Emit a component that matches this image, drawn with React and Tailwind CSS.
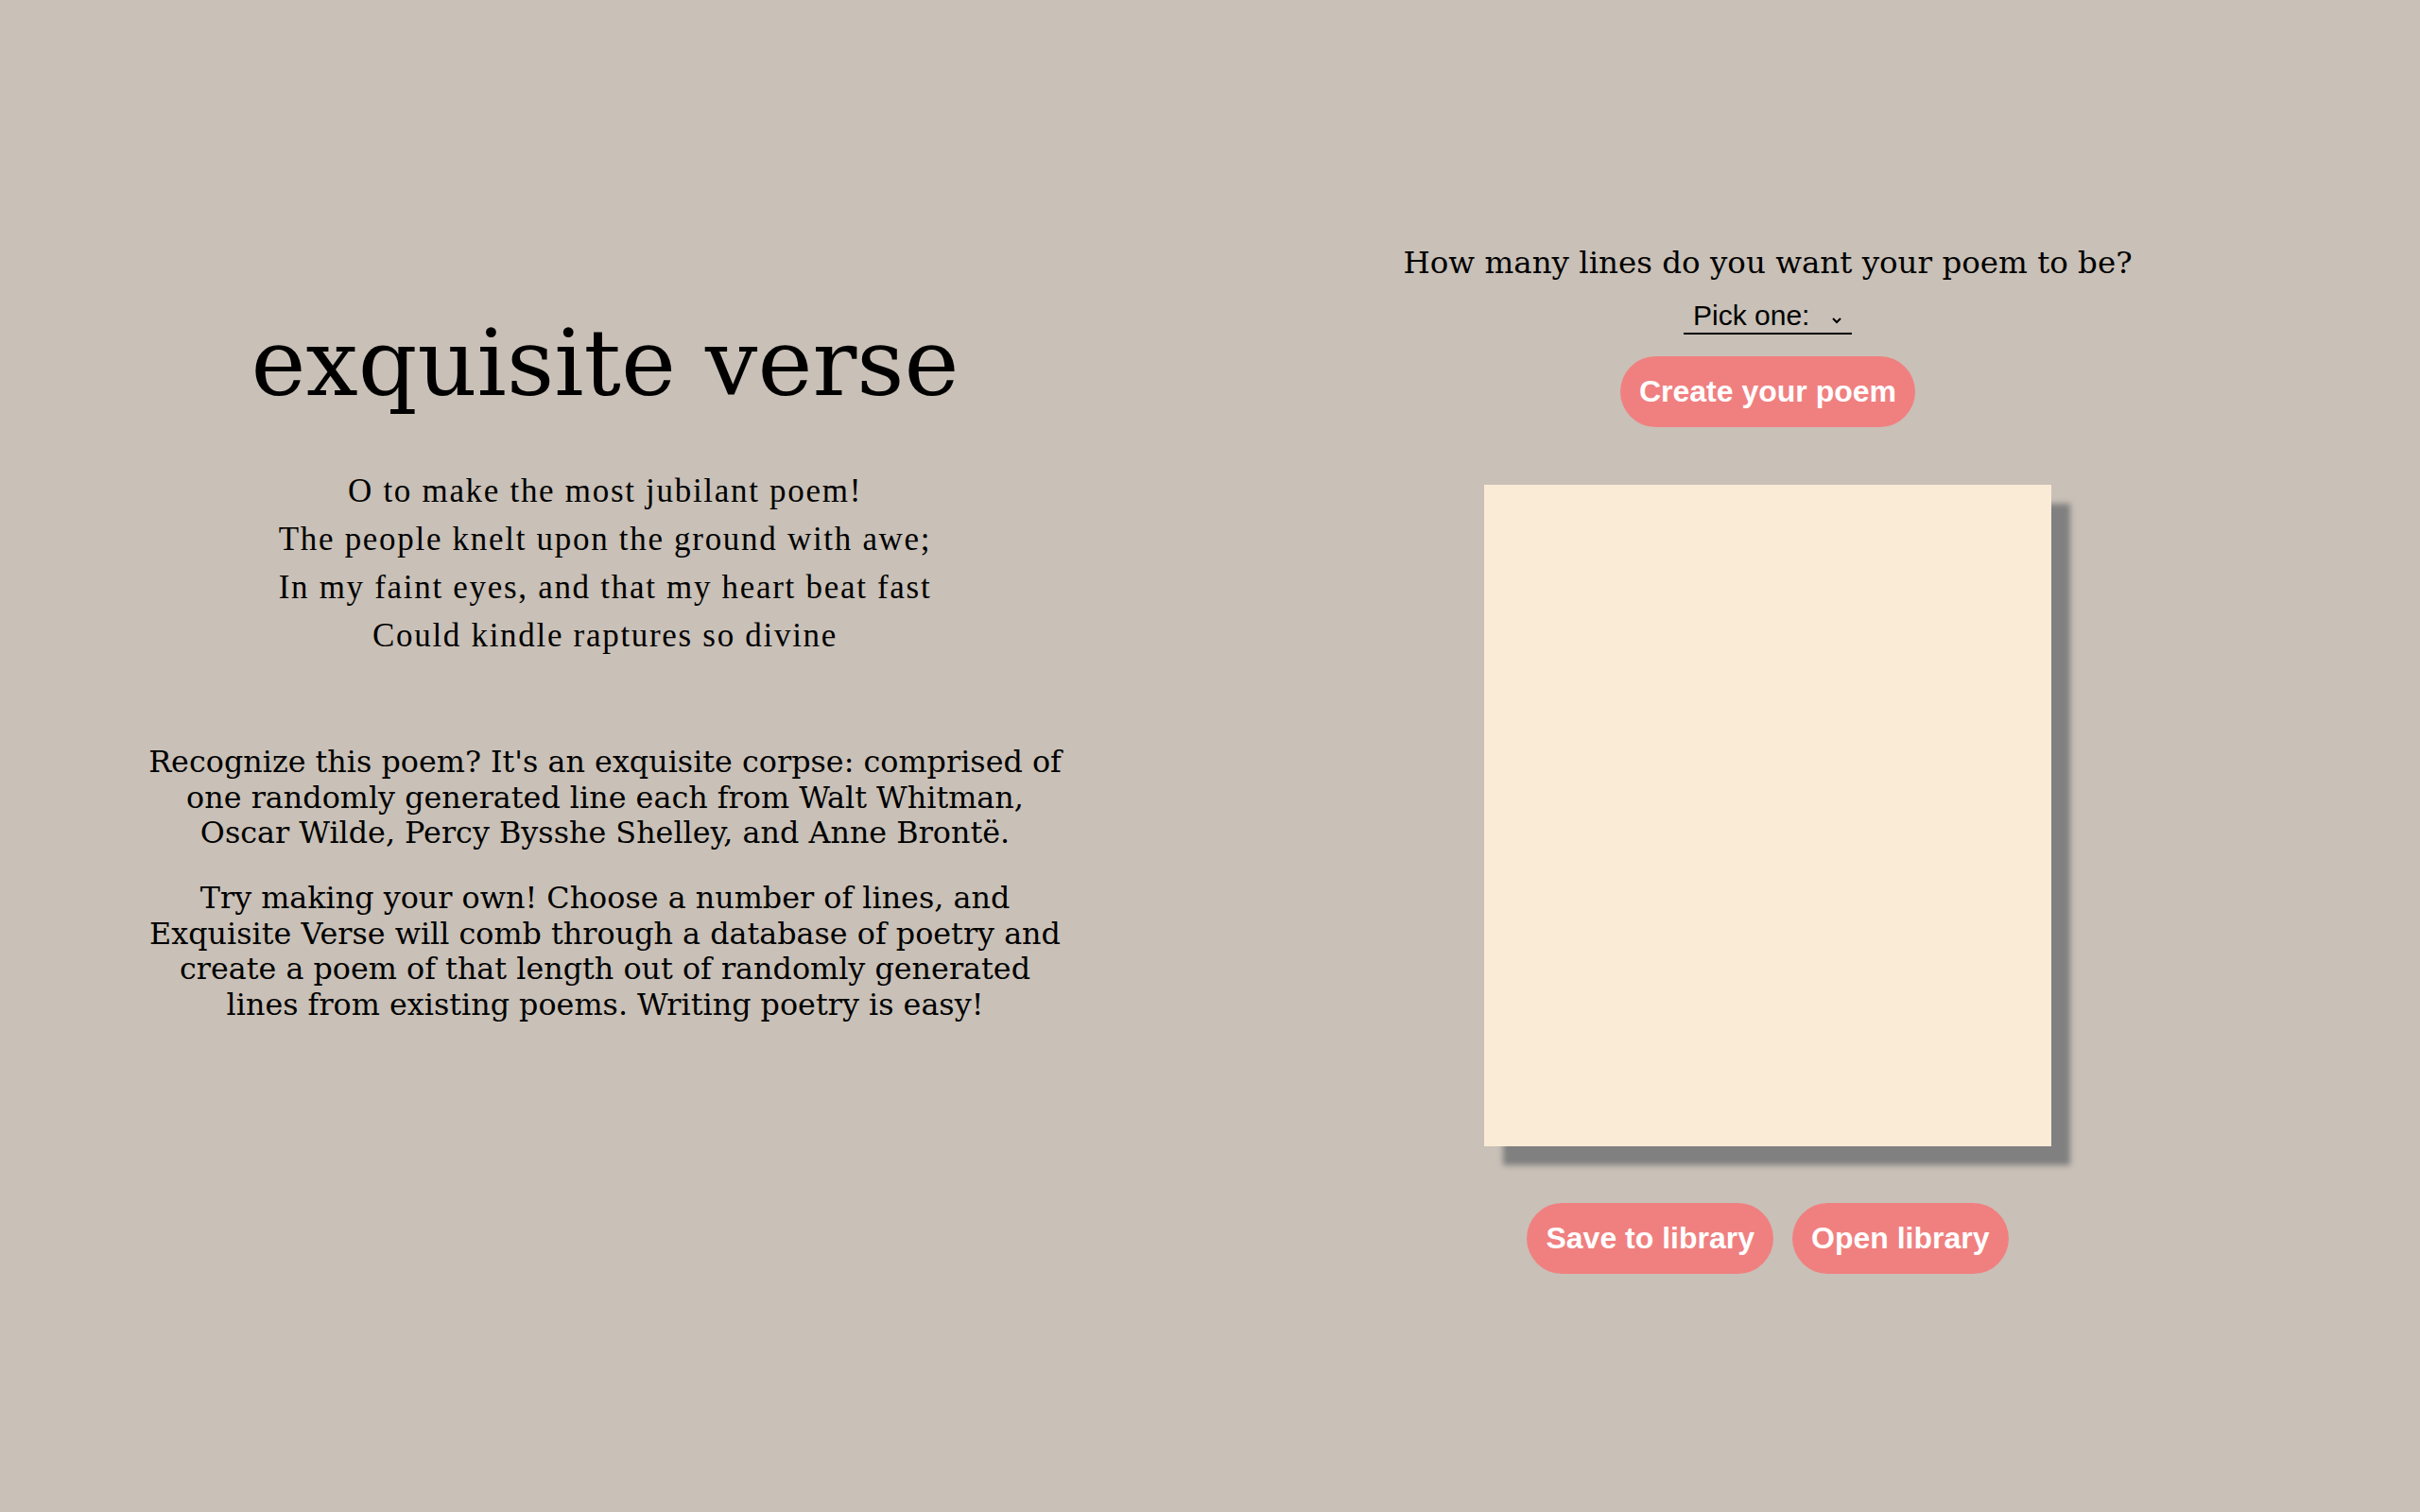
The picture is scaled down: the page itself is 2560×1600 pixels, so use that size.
import React, { useState } from 'react'

const poemLines = [
    'O to make the most jubilant poem!',
    'The people knelt upon the ground with awe;',
    'In my faint eyes, and that my heart beat fast',
    'Could kindle raptures so divine',
]

const Button = ({ children, onClick }) => (
    <button
        onClick={onClick}
        className="bg-[#f08080] text-white font-bold rounded-full px-5 py-[19px] text-[32px] leading-[37px] font-['Liberation_Sans',Arial,sans-serif] whitespace-nowrap"
    >
        {children}
    </button>
)

const App = () => {
    const [count, setCount] = useState('')

    return (
        <div className="min-h-screen w-full bg-[#c9c0b7] flex text-black">
            {/* Intro */}
            <div className="w-[1280px] flex flex-col items-center pt-[335px]">
                <h1 className="text-[98px] leading-none font-['DejaVu_Serif',serif] whitespace-nowrap">
                    exquisite verse
                </h1>

                <div className="mt-[61px] text-center text-[35px] leading-[51px] tracking-[1.7px] font-['Liberation_Serif',serif]">
                    {poemLines.map((line) => (
                        <p key={line}>{line}</p>
                    ))}
                </div>

                <div className="mt-[89px] text-center text-[31.8px] leading-[37.5px] font-['DejaVu_Serif',serif] whitespace-nowrap">
                    <p>
                        Recognize this poem? It's an exquisite corpse: comprised of<br />
                        one randomly generated line each from Walt Whitman,<br />
                        Oscar Wilde, Percy Bysshe Shelley, and Anne Brontë.
                    </p>
                    <p className="mt-[31.5px]">
                        Try making your own! Choose a number of lines, and<br />
                        Exquisite Verse will comb through a database of poetry and<br />
                        create a poem of that length out of randomly generated<br />
                        lines from existing poems. Writing poetry is easy!
                    </p>
                </div>
            </div>

            {/* Generator */}
            <div className="w-[1180px] flex flex-col items-center pt-[259px]">
                <p className="text-[32.5px] leading-[38px] font-['DejaVu_Serif',serif] whitespace-nowrap">
                    How many lines do you want your poem to be?
                </p>

                <div className="relative mt-[18px] w-[178px]">
                    <select
                        value={count}
                        onChange={(e) => setCount(e.target.value)}
                        className="appearance-none w-full bg-transparent border-0 border-b-2 border-black rounded-none pl-[10px] pr-[30px] text-[30px] leading-[37px] font-['Liberation_Sans',Arial,sans-serif] outline-none"
                    >
                        <option value="">Pick one:</option>
                        {[2, 3, 4, 5, 6, 7, 8, 9, 10].map((n) => (
                            <option key={n} value={n}>{n}</option>
                        ))}
                    </select>
                    <svg
                        className="pointer-events-none absolute right-[7px] top-[20px]"
                        width="18"
                        height="9"
                        viewBox="0 0 18 9"
                        fill="none"
                        stroke="black"
                        strokeWidth="2"
                    >
                        <path d="M5 2 L9 6 L13 2" />
                    </svg>
                </div>

                <div className="mt-[23px]">
                    <Button>Create your poem</Button>
                </div>

                <div className="mt-[61px] w-[600px] h-[700px] bg-[#faebd7] shadow-[20px_20px_6px_#808080]"></div>

                <div className="mt-[60px] flex gap-5">
                    <Button>Save to library</Button>
                    <Button>Open library</Button>
                </div>
            </div>
        </div>
    )
}

export default App
